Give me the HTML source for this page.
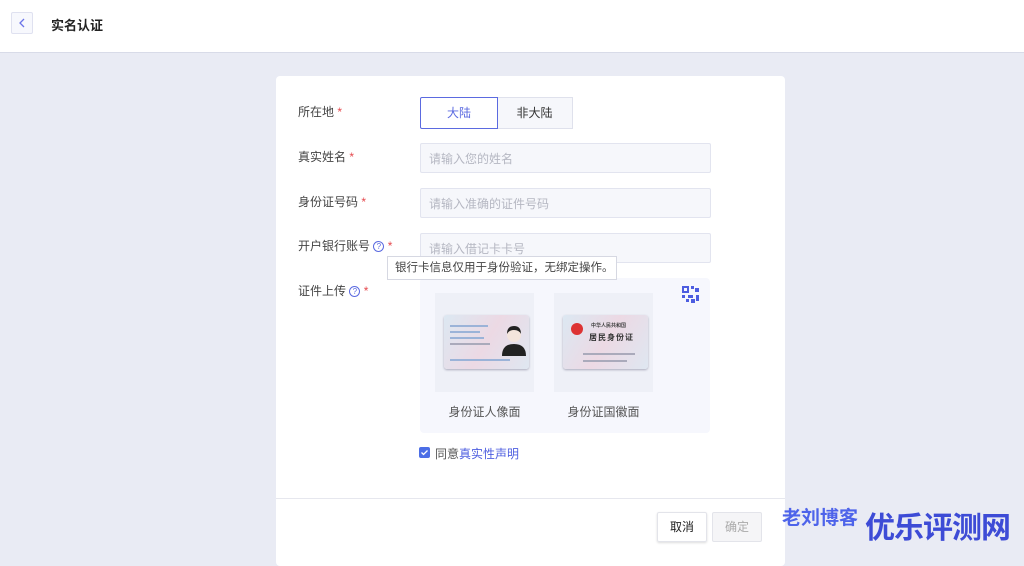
<!DOCTYPE html>
<html><head><meta charset="utf-8"><style>
*{box-sizing:border-box;margin:0;padding:0}
body{width:1024px;height:552px;overflow:hidden;background:#e9ebf4;font-family:"Liberation Sans","Noto Sans CJK SC",sans-serif;font-size:12px;color:#333;position:relative}
.hd{position:absolute;left:0;top:0;width:1024px;height:53px;background:#fff;border-bottom:1px solid #d8dbe8}
.back{position:absolute;left:11px;top:12px;width:22px;height:22px;border:1px solid #dfe1f0;border-radius:2px;background:#f7f8fd}
.title{position:absolute;left:51px;top:15px;font-size:13px;font-weight:bold;color:#222}
.card{position:absolute;left:276px;top:76px;width:509px;height:490px;background:#fff;border-radius:4px}
.lb{position:absolute;left:22px;font-size:12px;color:#444}
.st{color:#e5484d}
.inp{position:absolute;left:144px;width:291px;height:30px;background:#f6f7fb;border:1px solid #e2e4ef;border-radius:2px;color:#b5b7c2;padding:6px 8px;font-size:12px}
.q{display:inline-block;width:11px;height:11px;border:1px solid #5b6ae0;border-radius:50%;font-size:8px;line-height:9px;text-align:center;color:#5b6ae0;vertical-align:1px}
.seg{position:absolute;top:21px;height:32px;font-size:12px;text-align:center;line-height:30px}
.up{position:absolute;left:144px;top:202px;width:290px;height:155px;background:#f6f7fd;border-radius:4px}
.pic{position:absolute;top:15px;width:99px;height:99px;background:#eef0f7}
.idc{position:absolute;left:9px;top:22px;width:85px;height:54px;border-radius:3px;background:linear-gradient(120deg,#dce8f2,#ecd9e4 50%,#dfe7f1);box-shadow:0 1px 2px #aab}
.cap{position:absolute;top:125px;font-size:12px;color:#555;width:99px;text-align:center}
.btn{position:absolute;top:436px;width:50px;height:30px;border:1px solid #e3e4ea;border-radius:2px;text-align:center;line-height:28px;font-size:12px}
</style></head><body>
<div class="hd">
<div class="back"><svg width="20" height="20" viewBox="0 0 20 20"><path d="M12 6l-4 4 4 4" fill="none" stroke="#6b74e8" stroke-width="1.3"/></svg></div>
<div class="title">实名认证</div>
</div>
<div class="card">
<div class="lb" style="top:27px">所在地 <span class="st">*</span></div>
<div class="seg" style="left:144px;width:78px;border:1px solid #5b6ae0;color:#5b6ae0;background:#fff;z-index:1;border-radius:2px 0 0 2px">大陆</div>
<div class="seg" style="left:220px;width:77px;border:1px solid #dfe1ec;background:#f6f7fb;color:#333">非大陆</div>
<div class="lb" style="top:72px">真实姓名 <span class="st">*</span></div>
<div class="inp" style="top:67px">请输入您的姓名</div>
<div class="lb" style="top:117px">身份证号码 <span class="st">*</span></div>
<div class="inp" style="top:112px">请输入准确的证件号码</div>
<div class="lb" style="top:161px">开户银行账号 <span class="q">?</span> <span class="st">*</span></div>
<div class="inp" style="top:157px">请输入借记卡卡号</div>
<div class="lb" style="top:206px">证件上传 <span class="q">?</span> <span class="st">*</span></div>
<div class="up">
<svg style="position:absolute;left:262px;top:8px" width="18" height="18" viewBox="0 0 18 18" fill="#4d5de0"><rect x="0" y="0" width="7" height="7"/><rect x="2" y="2" width="3" height="3" fill="#f6f7fd"/><rect x="9" y="0" width="3" height="3"/><rect x="13" y="2" width="4" height="4"/><rect x="0" y="9" width="3" height="3"/><rect x="6" y="9" width="5" height="3"/><rect x="9" y="13" width="4" height="4"/><rect x="14" y="9" width="3" height="6"/><rect x="4" y="13" width="3" height="3"/></svg>
<div class="pic" style="left:15px"><div class="idc">
<div style="position:absolute;left:6px;top:10px;width:38px;height:2px;background:#9bb3d8"></div>
<div style="position:absolute;left:6px;top:16px;width:30px;height:2px;background:#9bb3d8"></div>
<div style="position:absolute;left:6px;top:22px;width:34px;height:2px;background:#9bb3d8"></div>
<div style="position:absolute;left:6px;top:28px;width:40px;height:2px;background:#aab"></div>
<div style="position:absolute;left:6px;top:44px;width:60px;height:2px;background:#9bb3d8"></div>
<svg style="position:absolute;left:57px;top:9px" width="26" height="32" viewBox="0 0 26 32"><circle cx="13" cy="11" r="7" fill="#f3e4dc"/><path d="M6 10q0-8 7-8t7 8q-2-4-7-4t-7 4z" fill="#222"/><path d="M1 32q0-12 12-12t12 12z" fill="#222"/></svg>
</div></div>
<div class="pic" style="left:134px"><div class="idc">
<div style="position:absolute;left:8px;top:8px;width:12px;height:12px;border-radius:50%;background:#d33"></div>
<div style="position:absolute;left:28px;top:7px;font-size:5px;color:#444;font-weight:bold">中华人民共和国</div>
<div style="position:absolute;left:26px;top:17px;font-size:8px;color:#333;font-weight:bold;letter-spacing:1px">居民身份证</div>
<div style="position:absolute;left:20px;top:38px;width:52px;height:2px;background:#aab"></div>
<div style="position:absolute;left:20px;top:45px;width:44px;height:2px;background:#aab"></div>
</div></div>
<div class="cap" style="left:15px">身份证人像面</div>
<div class="cap" style="left:134px">身份证国徽面</div>
</div>
<div style="position:absolute;left:111px;top:180px;width:230px;height:24px;background:#fff;border:1px solid #d6d8e2;font-size:11.5px;color:#444;line-height:22px;padding-left:7px;white-space:nowrap;overflow:hidden;z-index:3">银行卡信息仅用于身份验证，无绑定操作。</div>
<div style="position:absolute;left:143px;top:371px;width:11px;height:11px;background:#4c6ee6;border-radius:2px"><svg width="11" height="11" viewBox="0 0 11 11"><path d="M2.5 5.5l2 2 4-4" fill="none" stroke="#fff" stroke-width="1.3"/></svg></div>
<div style="position:absolute;left:159px;top:369px;color:#555">同意<span style="color:#4f5fe0">真实性声明</span></div>
<div style="position:absolute;left:0;top:422px;width:509px;height:1px;background:#e6e7ee"></div>
<div class="btn" style="left:381px;color:#222;box-shadow:0 1px 2px #ddd">取消</div>
<div class="btn" style="left:436px;background:#f5f5f7;color:#aaa">确定</div>
</div>
<div style="position:absolute;left:782px;top:503px;font-size:19px;font-weight:bold;color:#4d63ea">老刘博客</div>
<div style="position:absolute;left:865px;top:503px;font-size:30px;font-weight:bold;color:#3d4bd6;letter-spacing:-1px">优乐评测网</div>
</body></html>
